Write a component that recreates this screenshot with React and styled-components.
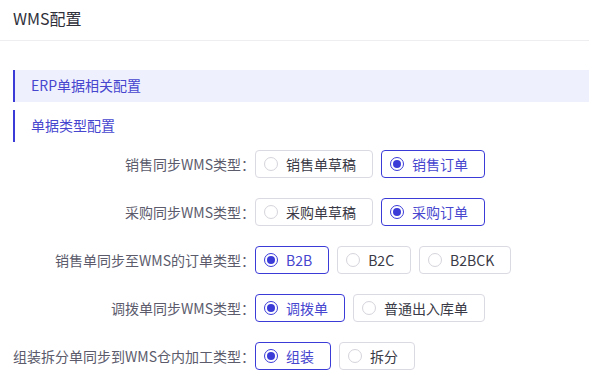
import React, { useState } from 'react';
import styled, { createGlobalStyle } from 'styled-components';

const GlobalStyle = createGlobalStyle`
  body {
    margin: 0;
    background: #fff;
    font-family: "Noto Sans CJK SC", "Noto Sans", sans-serif;
  }
`;

const rows = [
  { label: '销售同步WMS类型：', options: ['销售单草稿', '销售订单'], value: 1 },
  { label: '采购同步WMS类型：', options: ['采购单草稿', '采购订单'], value: 1 },
  { label: '销售单同步至WMS的订单类型：', options: ['B2B', 'B2C', 'B2BCK'], value: 0 },
  { label: '调拨单同步WMS类型：', options: ['调拨单', '普通出入库单'], value: 0 },
  { label: '组装拆分单同步到WMS仓内加工类型：', options: ['组装', '拆分'], value: 0 },
];

function RadioRow({ row }) {
  const [value, setValue] = useState(row.value);
  return (
    <Row>
      <Label>{row.label}</Label>
      <Options>
        {row.options.map((opt, i) => (
          <Option key={opt} checked={value === i} onClick={() => setValue(i)}>
            <Circle checked={value === i} />
            {opt}
          </Option>
        ))}
      </Options>
    </Row>
  );
}

export default function App() {
  return (
    <Page>
      <GlobalStyle />
      <Header>WMS配置</Header>
      <Content>
        <SectionBar filled>ERP单据相关配置</SectionBar>
        <SectionBar>单据类型配置</SectionBar>
        <Form>
          {rows.map((row) => (
            <RadioRow key={row.label} row={row} />
          ))}
        </Form>
      </Content>
    </Page>
  );
}

const Page = styled.div`
  width: 589px;
  height: 381px;
  overflow: hidden;
  background: #fff;
`;

const Header = styled.div`
  height: 40px;
  line-height: 36px;
  padding-left: 13px;
  font-size: 16px;
  color: #2f2f3a;
  border-bottom: 1px solid #eeeef0;
`;

const Content = styled.div`
  padding: 29px 0 0 13px;
`;

const SectionBar = styled.div`
  height: 32px;
  line-height: 31px;
  margin-bottom: 8px;
  padding-left: 16px;
  border-left: 2px solid #3b3bd8;
  background: ${({ filled }) => (filled ? '#eff0fd' : 'transparent')};
  font-size: 14px;
  color: #4646cf;
`;

const Form = styled.div`
  display: flex;
  flex-direction: column;
  gap: 20px;
`;

const Row = styled.div`
  display: flex;
  align-items: center;
  height: 28px;
`;

const Label = styled.div`
  width: 242px;
  flex-shrink: 0;
  text-align: right;
  font-size: 14px;
  color: #5b5b6c;
  white-space: nowrap;
`;

const Options = styled.div`
  display: flex;
  gap: 8px;
`;

const Option = styled.div`
  display: flex;
  align-items: center;
  gap: 8px;
  box-sizing: border-box;
  height: 28px;
  padding: 0 16px 0 8px;
  border: 1px solid ${({ checked }) => (checked ? '#3b3bd8' : '#dadae2')};
  border-radius: 4px;
  font-size: 14px;
  color: ${({ checked }) => (checked ? '#4646cf' : '#3a3a46')};
  cursor: pointer;
`;

const Circle = styled.span`
  position: relative;
  box-sizing: border-box;
  width: 14px;
  height: 14px;
  border-radius: 50%;
  border: 1px solid ${({ checked }) => (checked ? '#3b3bd8' : '#d4d4dc')};
  &::after {
    content: '';
    display: ${({ checked }) => (checked ? 'block' : 'none')};
    position: absolute;
    left: 2px;
    top: 2px;
    width: 8px;
    height: 8px;
    border-radius: 50%;
    background: #3b3bd8;
  }
`;
